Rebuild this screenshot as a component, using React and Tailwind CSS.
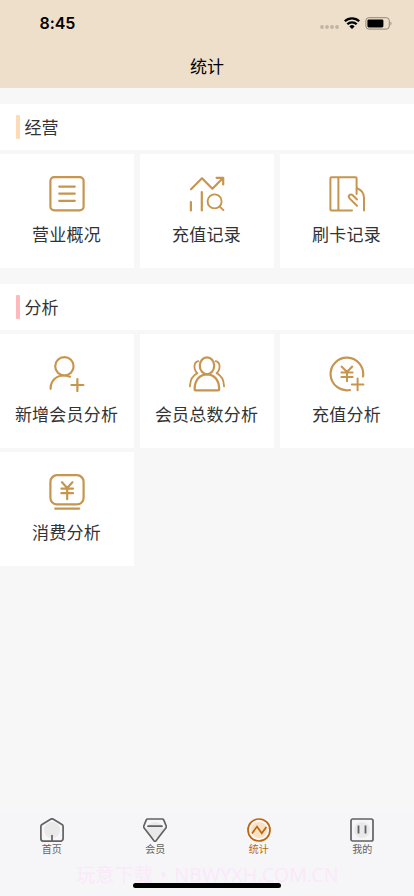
const GOLD = '#c8954e';

function TileIcon({ children }) {
  return (
    <svg className="h-9 w-9 shrink-0" viewBox="0 0 36 36" fill="none" stroke={GOLD} strokeWidth="2.2" strokeLinecap="round" strokeLinejoin="round">
      {children}
    </svg>
  );
}

const overview = (
  <TileIcon>
    <rect x="1.4" y="1.2" width="33.2" height="33.2" rx="3.8" />
    <path d="M10.2 10.6h15.6M10.2 17.6h15.6M10.2 24.8h15.6" />
  </TileIcon>
);

const rechargeLog = (
  <TileIcon>
    <path d="M2 13.2 13 2.2 23.4 12.8 34 2M27.6 1.8H34.2V8.4M1.9 26v8.4M12.8 16v18.4" />
    <circle cx="25.6" cy="25.4" r="7" strokeWidth="1.9" />
    <path d="M30.5 30.3 34.4 34.2" strokeWidth="1.9" />
  </TileIcon>
);

const cardLog = (
  <TileIcon>
    <path d="M23 34.4H2.4a1 1 0 0 1-1-1V2.2a1 1 0 0 1 1-1H26.600a1 1 0 0 1 1 1V18M9.400 1.200v33.200" strokeWidth="2" />
    <path d="M28 12.200c4.500 1.600 7 5 7 9.800v12.400M28 29.800 20.800 22.600c-2.400-2.600 .3-5.400 3-3.300l4.200 4.200" strokeWidth="2" />
  </TileIcon>
);

const newMember = (
  <TileIcon>
    <circle cx="15.400" cy="10.300" r="9.200" />
    <path d="M1.600 32.800C1.600 24.500 7.400 19.500 14.800 19.500c2.400 0 4.200.4 6.200 1.200M22.400 29h12M28.400 23v12" />
  </TileIcon>
);

const members = (
  <TileIcon>
    <ellipse cx="18" cy="9.800" rx="7.200" ry="8.500" />
    <path d="M6.600 34.400a1 1 0 0 1-1-1C5.600 24.500 10.500 18.300 18 18.300S30.200 24.500 30.200 33.400a1 1 0 0 1-1 1Z" />
    <path d="M9.300 5.200C5.800 6.200 5 9.600 5.800 13 6.200 14.900 7 16 8.400 17.100 3.500 19.400 1.200 24 .9 30.400M26.700 5.200c3.500 1 4.300 4.400 3.500 7.800-.4 1.900-1.200 3-2.600 4.100 4.900 2.300 7.200 6.900 7.500 13.300" strokeWidth="1.800" />
  </TileIcon>
);

const rechargeStats = (
  <TileIcon>
    <path d="M34 20.500A16.300 16.300 0 1 0 21 34" />
    <path d="M12.600 10.500 18 16l5.200-5.500M18 16v9.200M12.400 16.600h11.200M12.400 21h11.200M22.800 28.400h11.600M28.600 22.600v11.600" strokeWidth="2" />
  </TileIcon>
);

const spending = (
  <TileIcon>
    <rect x="1.400" y="1.200" width="33.200" height="29.200" rx="6.600" />
    <path d="M13 8.200 18.200 14l5.200-5.800M18.200 14v11.200M12.400 14.600H24M12.400 19.200H24M6.200 34.600h24" />
  </TileIcon>
);

const sections = [
  {
    title: '经营',
    bar: 'bg-[#ffdbb5]',
    tiles: [
      ['营业概况', overview],
      ['充值记录', rechargeLog],
      ['刷卡记录', cardLog],
    ],
  },
  {
    title: '分析',
    bar: 'bg-[#ffb9bc]',
    tiles: [
      ['新增会员分析', newMember],
      ['会员总数分析', members],
      ['充值分析', rechargeStats],
      ['消费分析', spending],
    ],
  },
];

function TabIcon({ children, color, fill }) {
  return (
    <svg className="h-6 w-6 shrink-0" viewBox="0 0 24 24" fill="none" stroke={color} strokeWidth="1.700" strokeLinejoin="round" strokeLinecap="round">
      <circle cx="12" cy="12" r="8" fill={fill} stroke="none" />
      {children}
    </svg>
  );
}

const GREY = '#626262';
const tabs = [
  {
    label: '首页',
    icon: (
      <TabIcon color={GREY} fill="#e9e9e9">
        <path d="M10.600 1.200 2 6.400Q.9 7 .9 8.200V20.400a2.800 2.800 0 0 0 2.800 2.800H20.300a2.800 2.800 0 0 0 2.800-2.800V8.200Q23.100 7 22 6.400L13.400 1.200Q12 .4 10.600 1.200ZM12 17.500V23" />
      </TabIcon>
    ),
  },
  {
    label: '会员',
    icon: (
      <TabIcon color={GREY} fill="#e9e9e9">
        <path d="M4.700 1H19.300q1 0 1.400.9L23.200 8q.4 1-.2 1.800L13 22.800q-1 1-2 0L1 9.800Q.4 9 .8 8L3.300 1.900Q3.700 1 4.700 1ZM5 8.200H19" />
      </TabIcon>
    ),
  },
  {
    label: '统计',
    active: true,
    icon: (
      <TabIcon color="#bb660b" fill="#fae0c3">
        <circle cx="12" cy="12" r="11" />
        <path d="M5 15.400 10 8.600l4.800 6.600L19.400 9" strokeLinecap="butt" strokeLinejoin="miter" />
      </TabIcon>
    ),
  },
  {
    label: '我的',
    icon: (
      <TabIcon color={GREY} fill="#e9e9e9">
        <rect x="1" y="1" width="22" height="22" rx="1.800" />
        <path d="M8.500 7.500v8M15.500 7.500v8" strokeLinecap="butt" strokeWidth="1.800" />
      </TabIcon>
    ),
  },
];

function StatusBar() {
  return (
    <div className="flex h-11 items-center justify-between pt-0.5 pr-[22px] pl-[39.5px]">
      <span className="font-['Inter'] text-[16px] leading-5 font-semibold tracking-[-0.1px] text-black">8:45</span>
      <div className="flex items-center">
        <svg className="mt-2 mr-[5px] h-1 w-[19px]" viewBox="0 0 19 4" fill="#bfb4a5">
          <circle cx="2" cy="2" r="1.900" />
          <circle cx="7" cy="2" r="1.900" />
          <circle cx="12" cy="2" r="1.900" />
          <circle cx="17" cy="2" r="1.900" />
        </svg>
        <svg className="h-3 w-4" viewBox="0 0 16 12" fill="none" stroke="#000" strokeWidth="2.300">
          <path d="M.8 4.300a10.200 10.200 0 0 1 14.400 0M3.300 7.300a6.600 6.600 0 0 1 9.400 0" />
          <path d="M5.400 9.400a3.700 3.700 0 0 1 5.200 0L8 12Z" fill="#000" stroke="none" />
        </svg>
        <svg className="ml-[5px] h-[13px] w-[27px]" viewBox="0 0 27 13" fill="none">
          <rect x=".9" y=".7" width="23.400" height="11.400" rx="3" stroke="#8f867a" />
          <rect x="2.400" y="2.400" width="16" height="8" rx="1.400" fill="#000" />
          <path d="M25.500 4.600c1.300.4 1.300 3.400 0 3.800Z" fill="#8f867a" />
        </svg>
      </div>
    </div>
  );
}

export default function App() {
  return (
    <div className="relative flex h-[896px] w-[414px] flex-col overflow-hidden bg-[#f7f7f7] font-['Noto_Sans_CJK_SC',sans-serif] text-[#333]">
      <header className="h-[88px] shrink-0 bg-[#eedfca]">
        <StatusBar />
        <h1 className="flex h-11 items-center justify-center text-[17px] leading-6 text-black">统计</h1>
      </header>

      <main className="flex-1">
        {sections.map((s) => (
          <section key={s.title} className="mt-4">
            <div className="mb-1 flex h-[46px] items-center bg-white pl-4">
              <span className={`mr-[5px] h-6 w-[3.5px] rounded-[1px] ${s.bar}`} />
              <h2 className="text-[17px] leading-6">{s.title}</h2>
            </div>
            <div className="grid grid-cols-3 gap-x-1.5 gap-y-1">
              {s.tiles.map(([label, icon]) => (
                <button key={label} className="flex h-[114px] flex-col items-center bg-white pt-[22px]">
                  {icon}
                  <span className="mt-2.5 pr-px text-[17px] leading-6 tracking-[0.2px] whitespace-nowrap">{label}</span>
                </button>
              ))}
            </div>
          </section>
        ))}
      </main>

      <nav className="grid h-[84px] shrink-0 grid-cols-4 bg-[#f6f6f9]">
        {tabs.map((t) => (
          <div key={t.label} className={`flex flex-col items-center pt-1.5 text-[10px] leading-3.5 ${t.active ? 'text-[#bb660b]' : 'text-[#626262]'}`}>
            {t.icon}
            <span>{t.label}</span>
          </div>
        ))}
      </nav>

      <p className="absolute top-[861px] left-[76px] flex font-['Noto_Sans','Noto_Sans_CJK_SC',sans-serif] text-[19.3px] leading-7 whitespace-nowrap text-[#fae9f9]">
        <span>玩意下载</span>
        <span className="w-[21px] text-center">•</span>
        <span className="text-[19.7px]">NBWYXH.COM.CN</span>
      </p>
      <div className="absolute top-[883px] left-[133px] h-[5px] w-[148px] rounded-full bg-black" />
    </div>
  );
}
